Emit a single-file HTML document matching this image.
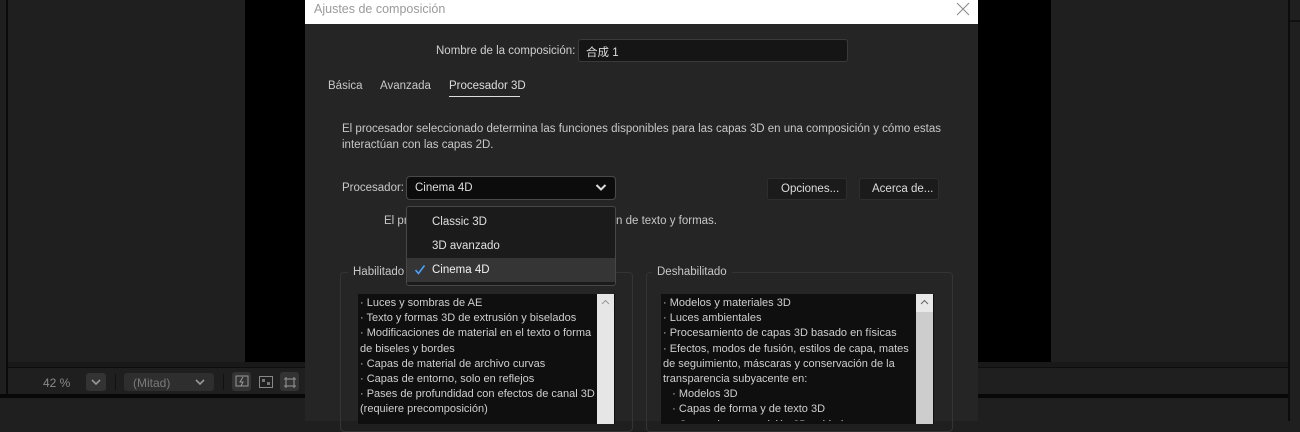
<!DOCTYPE html>
<html><head><meta charset="utf-8"><style>
*{margin:0;padding:0;box-sizing:border-box}
body{width:1300px;height:421px;background:#1f1f1f;position:relative;overflow:hidden;font-family:"Liberation Sans","Noto Sans CJK SC",sans-serif;font-size:11.5px;color:#c8c8c8}
.a{position:absolute}
.t{position:absolute;white-space:nowrap}
</style></head><body>
<div class="a" style="left:6px;top:0;width:2px;height:394px;background:#0a0a0a"></div>
<div class="a" style="left:245px;top:0;width:60px;height:362px;background:#000"></div>
<div class="a" style="left:978px;top:0;width:73px;height:362px;background:#000"></div>
<div class="a" style="left:8px;top:362px;width:1282px;height:6px;background:#191919"></div>
<div class="a" style="left:8px;top:367px;width:1282px;height:1px;background:#0e0e0e"></div>
<div class="a" style="left:0;top:394px;width:1290px;height:4px;background:#080808"></div>
<div class="a" style="left:1288px;top:0;width:2px;height:421px;background:#0c0c0c"></div>
<div class="a" style="left:1290px;top:20px;width:10px;height:2px;background:#111"></div>
<div class="t" style="left:43px;top:376px;color:#8a8a8a;font-size:12px">42 %</div>
<div class="a" style="left:86px;top:373px;width:20px;height:18px;background:#333;border-radius:3px"></div>
<svg class="a" style="left:90px;top:378px" width="12" height="8"><path d="M2 2l4 4 4-4" stroke="#999" stroke-width="1.6" fill="none"/></svg>
<div class="a" style="left:115px;top:374px;width:1px;height:16px;background:#111"></div>
<div class="a" style="left:124px;top:373px;width:90px;height:18px;background:#2e2e2e;border-radius:3px"></div>
<div class="t" style="left:133px;top:376px;color:#7a7a7a;font-size:12px">(Mitad)</div>
<svg class="a" style="left:194px;top:378px" width="12" height="8"><path d="M2 2l4 4 4-4" stroke="#999" stroke-width="1.6" fill="none"/></svg>
<div class="a" style="left:223px;top:374px;width:1px;height:16px;background:#111"></div>
<div class="a" style="left:232px;top:372px;width:19px;height:19px;background:#333;border-radius:3px"></div>
<svg class="a" style="left:235px;top:375px" width="14" height="13"><rect x="1" y="1" width="12" height="10" stroke="#999" fill="none"/><path d="M8 2l-3 5h3l-2 4" stroke="#999" fill="none"/></svg>
<svg class="a" style="left:259px;top:376px" width="14" height="12"><rect x="0.5" y="0.5" width="13" height="11" stroke="#888" fill="none"/><rect x="3" y="3" width="3" height="3" fill="#777"/><rect x="8" y="6" width="3" height="3" fill="#777"/></svg>
<div class="a" style="left:280px;top:372px;width:19px;height:19px;background:#333;border-radius:3px"></div>
<svg class="a" style="left:283px;top:375px" width="14" height="13"><path d="M1 4h12M1 11h12M3 2v11M11 2v11" stroke="#999" fill="none"/></svg>

<div class="a" style="left:305px;top:0;width:673px;height:421px;background:#252525"></div>
<div class="a" style="left:305px;top:0;width:673px;height:24px;background:#fff"></div>
<div class="t" style="left:314px;top:2px;color:#9a9a9a;font-size:12.5px">Ajustes de composición</div>
<svg class="a" style="left:956px;top:2px" width="14" height="14"><path d="M1 1l12 12M13 1L1 13" stroke="#888" stroke-width="1"/></svg>

<div class="t" style="left:436px;top:45px;color:#d0d0d0">Nombre de la composición:</div>
<div class="a" style="left:578px;top:39px;width:270px;height:23px;background:#151515;border:1px solid #3a3a3a;border-radius:3px"></div>
<div class="t" style="left:586px;top:44px;color:#ddd">合成 1</div>

<div class="t" style="left:328px;top:80px">Básica</div>
<div class="t" style="left:380px;top:80px">Avanzada</div>
<div class="t" style="left:449px;top:80px;color:#ddd">Procesador 3D</div>
<div class="a" style="left:449px;top:96px;width:71px;height:1px;background:#ddd"></div>

<div class="t" style="left:342px;top:121px;line-height:16px">El procesador seleccionado determina las funciones disponibles para las capas 3D en una composición y cómo estas<br>interactúan con las capas 2D.</div>

<div class="t" style="left:342px;top:182px">Procesador:</div>
<div class="a" style="left:406px;top:176px;width:210px;height:24px;background:#0c0c0c;border:1px solid #4a4a4a;border-radius:4px"></div>
<div class="t" style="left:415px;top:182px;color:#ddd">Cinema 4D</div>
<svg class="a" style="left:595px;top:183px" width="12" height="9"><path d="M1.5 2l4.5 4.5 4.5-4.5" stroke="#ddd" stroke-width="2" fill="none"/></svg>

<div class="a" style="left:767px;top:178px;width:80px;height:22px;background:#1b1b1b;border:1px solid #2e2e2e;border-radius:3px"></div>
<div class="t" style="left:781px;top:183px;color:#ddd">Opciones...</div>
<div class="a" style="left:859px;top:178px;width:80px;height:22px;background:#1b1b1b;border:1px solid #2e2e2e;border-radius:3px"></div>
<div class="t" style="left:872px;top:183px;color:#ddd">Acerca de...</div>

<div class="t" style="left:384px;top:215px">El pr</div>
<div class="t" style="left:616px;top:215px">n de texto y formas.</div>

<div class="a" style="left:340px;top:272px;width:293px;height:160px;border:1px solid #343434;border-radius:4px"></div>
<div class="t" style="left:348px;top:266px;background:#252525;padding:0 5px">Habilitado</div>
<div class="a" style="left:646px;top:272px;width:307px;height:160px;border:1px solid #343434;border-radius:4px"></div>
<div class="t" style="left:652px;top:266px;background:#252525;padding:0 5px">Deshabilitado</div>

<div class="a" style="left:358px;top:294px;width:257px;height:130px;background:#0f0f0f;overflow:hidden"></div>
<div class="a" style="left:597px;top:294px;width:17px;height:130px;background:#e6e6e6"></div>
<svg class="a" style="left:601px;top:299px" width="9" height="7"><path d="M1 5l3.5-3.5L8 5" stroke="#999" fill="none"/></svg>
<div class="t" style="left:360px;top:296px;line-height:15.2px;font-size:11px;color:#cfcfcf">· Luces y sombras de AE<br>· Texto y formas 3D de extrusión y biselados<br>· Modificaciones de material en el texto o forma<br>de biseles y bordes<br>· Capas de material de archivo curvas<br>· Capas de entorno, solo en reflejos<br>· Pases de profundidad con efectos de canal 3D<br>(requiere precomposición)</div>

<div class="a" style="left:661px;top:294px;width:273px;height:130px;background:#0f0f0f"></div>
<div class="a" style="left:916px;top:294px;width:17px;height:130px;background:#cdcdcd"></div>
<div class="a" style="left:916px;top:294px;width:17px;height:18px;background:#e8e8e8"></div>
<svg class="a" style="left:920px;top:299px" width="9" height="7"><path d="M1 5l3.5-3.5L8 5" stroke="#666" fill="none"/></svg>
<div class="a" style="left:661px;top:294px;width:255px;height:127px;overflow:hidden">
<div class="t" style="left:2px;top:2px;line-height:15.2px;font-size:11px;color:#cfcfcf">· Modelos y materiales 3D<br>· Luces ambientales<br>· Procesamiento de capas 3D basado en físicas<br>· Efectos, modos de fusión, estilos de capa, mates<br>de seguimiento, máscaras y conservación de la<br>transparencia subyacente en:<br>&nbsp;&nbsp;&nbsp;· Modelos 3D<br>&nbsp;&nbsp;&nbsp;· Capas de forma y de texto 3D<br>&nbsp;&nbsp;&nbsp;· Capas de composición 3D anidadas</div>
</div>

<div class="a" style="left:406px;top:206px;width:210px;height:80px;background:#1b1b1b;border:1px solid #474747;border-radius:3px"></div>
<div class="a" style="left:407px;top:258px;width:208px;height:24px;background:#353535"></div>
<div class="t" style="left:432px;top:216px;color:#e0e0e0">Classic 3D</div>
<div class="t" style="left:432px;top:240px;color:#e0e0e0">3D avanzado</div>
<svg class="a" style="left:414px;top:264px" width="12" height="11"><path d="M1.5 6l3 3.5 6-8" stroke="#4aa0ff" stroke-width="1.6" fill="none"/></svg>
<div class="t" style="left:432px;top:264px;color:#f0f0f0">Cinema 4D</div>
</body></html>
